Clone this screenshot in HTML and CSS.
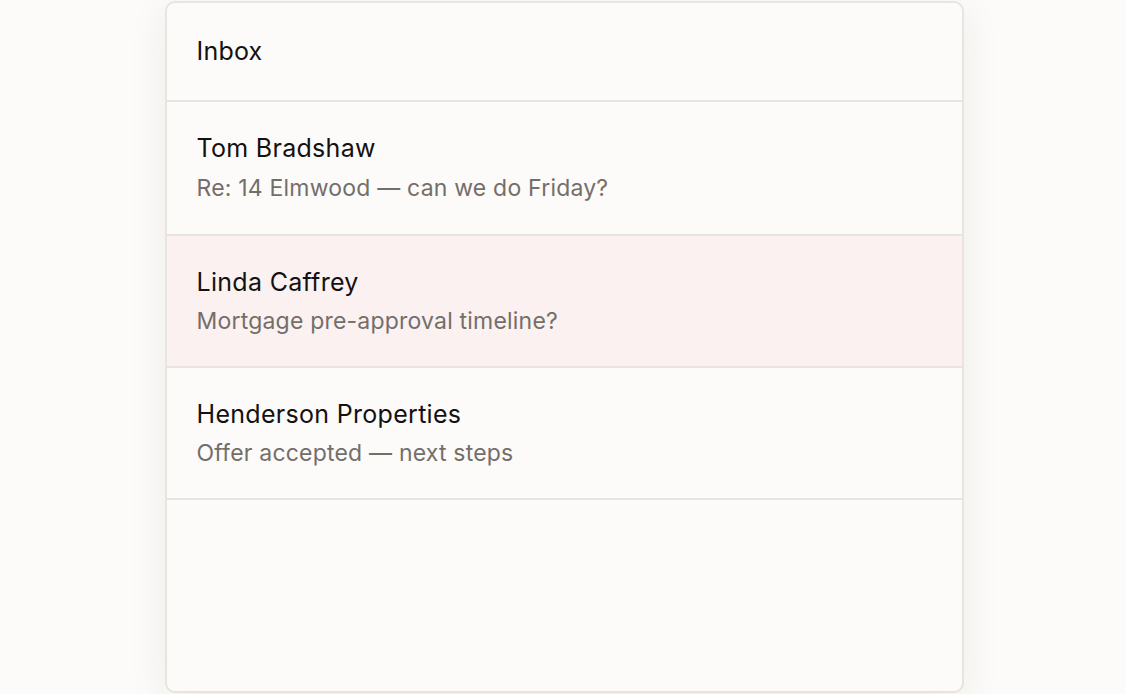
FILE: index.html
```html
<!DOCTYPE html>
<html lang="en">
<head>
    <meta charset="UTF-8">
    <meta name="viewport" content="width=device-width, initial-scale=1.0">
    <title>Inbox</title>
    <link rel="stylesheet" href="styles.css">
</head>
<body>
    <div class="inbox">
        <div class="inbox-header">Inbox</div>
        <div class="message">
            <div class="sender">Tom Bradshaw</div>
            <div class="subject">Re: 14 Elmwood — can we do Friday?</div>
        </div>
        <div class="message active">
            <div class="sender">Linda Caffrey</div>
            <div class="subject">Mortgage pre-approval timeline?</div>
        </div>
        <div class="message">
            <div class="sender">Henderson Properties</div>
            <div class="subject">Offer accepted — next steps</div>
        </div>
    </div>
</body>
</html>
```

FILE: styles.css
```css
/* General Styles */
body {
    font-family: Inter, "Noto Sans", sans-serif;
    margin: 0;
    padding: 1px 0 1px 2px;
    background-color: #fcfbf9;
}

.inbox {
    width: 799px;
    height: 692px;
    box-sizing: border-box;
    margin: 0 auto;
    background: #fcfbf9;
    border: 2px solid #e9e4df;
    border-radius: 10px;
    box-shadow: 0px 8px 40px rgba(60, 40, 30, 0.07);
    overflow: hidden;
}

.inbox-header {
    padding: 32px 30px 33px;
    font-size: 25px;
    line-height: 32px;
    letter-spacing: 0.2px;
    color: #141110;
    border-bottom: 2px solid #e9e4df;
}

.message {
    padding: 30px 30px;
    border-bottom: 2px solid #e9e4df;
}

.inbox-header + .message {
    padding-bottom: 31px;
}

.inbox-header + .message .subject {
    margin-top: 9px;
}

.message.active {
    background: #faf1f0;
}

.sender {
    font-size: 25px;
    line-height: 32px;
    letter-spacing: 0.3px;
    color: #141110;
}

.subject {
    margin-top: 8px;
    font-size: 23px;
    line-height: 30px;
    letter-spacing: 0.2px;
    color: #746e6a;
}
```
